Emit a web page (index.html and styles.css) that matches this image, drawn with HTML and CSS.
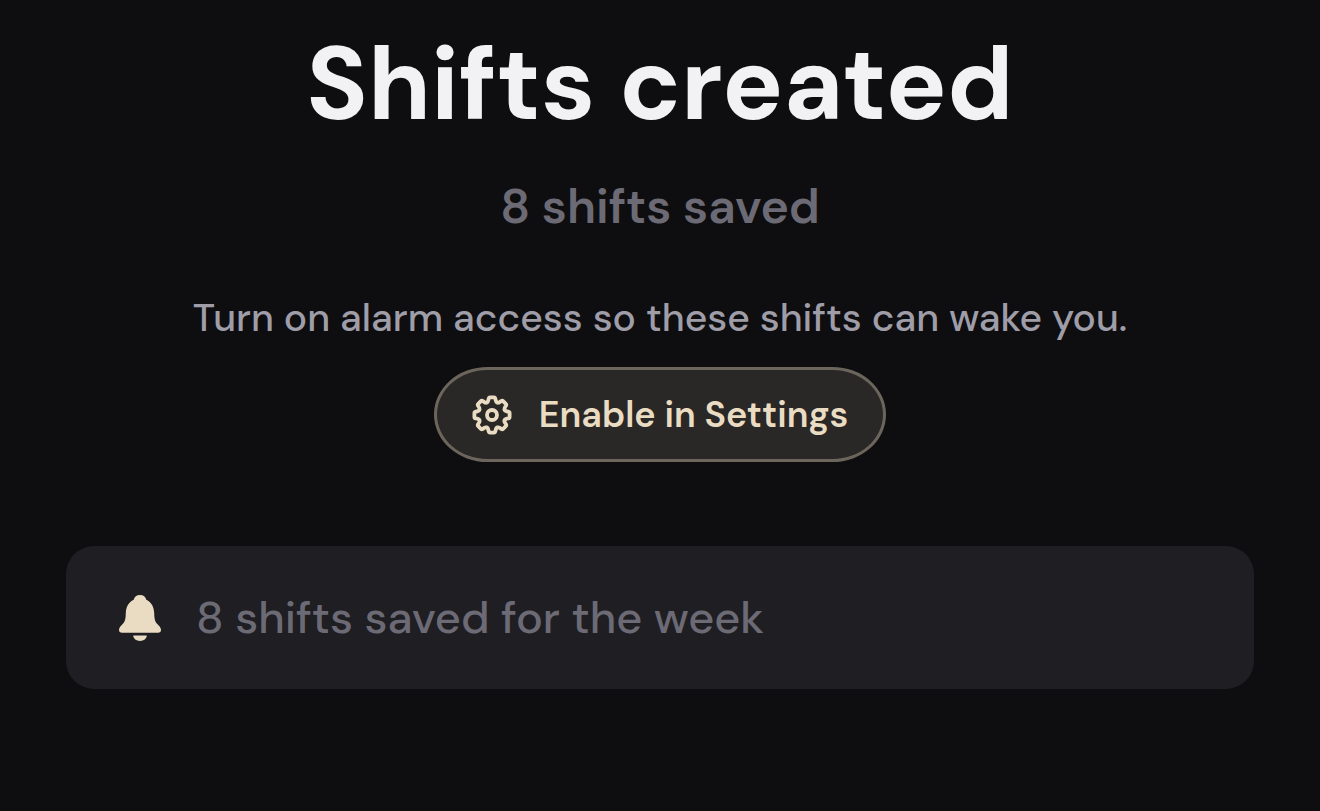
FILE: index.html
```html
<!DOCTYPE html>
<html lang="en">
<head>
  <meta charset="utf-8">
  <meta name="viewport" content="width=device-width, initial-scale=1">
  <title>Shifts created</title>
  <link rel="stylesheet" href="styles.css">
</head>
<body>
  <main class="screen">
    <h1>Shifts created</h1>
    <p class="count">8 shifts saved</p>

    <p class="hint">Turn on alarm access so these shifts can wake you.</p>
    <button type="button" class="settings-button">
      <svg class="gear" viewBox="-20 -20 40 40" aria-hidden="true">
        <defs>
          <path id="tooth" d="M-5.200-12.600C-4.300-13-3.900-13.600-3.700-14.600L-3.400-16.200Q-3.100-17.600-1.900-17.600H1.900Q3.100-17.600 3.400-16.200L3.700-14.600C3.900-13.600 4.300-13 5.200-12.600" />
        </defs>
        <use href="#tooth" />
        <use href="#tooth" transform="rotate(45)" />
        <use href="#tooth" transform="rotate(90)" />
        <use href="#tooth" transform="rotate(135)" />
        <use href="#tooth" transform="rotate(180)" />
        <use href="#tooth" transform="rotate(225)" />
        <use href="#tooth" transform="rotate(270)" />
        <use href="#tooth" transform="rotate(315)" />
        <circle r="5" />
      </svg>
      <span>Enable in Settings</span>
    </button>

    <div class="card">
      <svg class="bell" viewBox="0 0 42 46" aria-hidden="true">
        <path d="M21 0C24.500 0 26.500 2 27.300 4.700C32.500 7 35 12 35.200 18C35.400 25 36 27 39.500 30.200C41.300 32 42 33.400 42 35C42 36.800 40.800 37.800 39 37.800H3C1.200 37.800 0 36.800 0 35C0 33.400.7 32 2.500 30.200C6 27 6.600 25 6.800 18C7 12 9.500 7 14.700 4.700C15.500 2 17.500 0 21 0Z" />
        <path d="M14.200 40.600H27.800C27.600 43.800 24.800 46 21 46S14.400 43.800 14.200 40.600Z" />
      </svg>
      <p>8 shifts saved for the week</p>
    </div>
  </main>
</body>
</html>
```

FILE: styles.css
```css
* {
  box-sizing: border-box;
}

body {
  margin: 0;
  background-color: #0e0e10;
  color: #f2f2f5;
  font-family: "DM Sans", Inter, sans-serif;
  font-optical-sizing: none;
}

h1,
p {
  margin: 0;
}

.screen {
  display: flex;
  flex-direction: column;
  align-items: center;
  padding: 25px 66px;
  text-align: center;
}

h1 {
  font-size: 102px;
  font-weight: 700;
  line-height: 120px;
}

.count {
  margin-top: 31px;
  color: #6c6b75;
  font-size: 48px;
  font-weight: 600;
  line-height: 62px;
}

.hint {
  margin-top: 54px;
  color: #9f9da8;
  font-size: 39px;
  font-weight: 500;
  line-height: 52px;
}

.settings-button {
  display: flex;
  align-items: center;
  gap: 27px;
  margin-top: 23px;
  padding: 20px 35px;
  border: 3px solid #6b655b;
  border-radius: 54px / 48px;
  background-color: #292826;
  color: #eadcc3;
  font-family: inherit;
  font-optical-sizing: inherit;
  font-size: 36px;
  font-weight: 600;
  line-height: 49px;
  cursor: pointer;
}

.gear {
  width: 40px;
  height: 40px;
  fill: none;
  stroke: currentColor;
  stroke-width: 3.8;
  stroke-linecap: round;
  stroke-linejoin: round;
}

.card {
  display: flex;
  align-items: center;
  gap: 35px;
  width: 100%;
  margin-top: 84px;
  padding: 40px 53px;
  border-radius: 28px;
  background-color: #1f1e23;
  color: #6c6b75;
  font-size: 45px;
  font-weight: 500;
  line-height: 63px;
  text-align: left;
}

.bell {
  flex-shrink: 0;
  width: 42px;
  height: 46px;
  fill: #eadcc3;
}
```
